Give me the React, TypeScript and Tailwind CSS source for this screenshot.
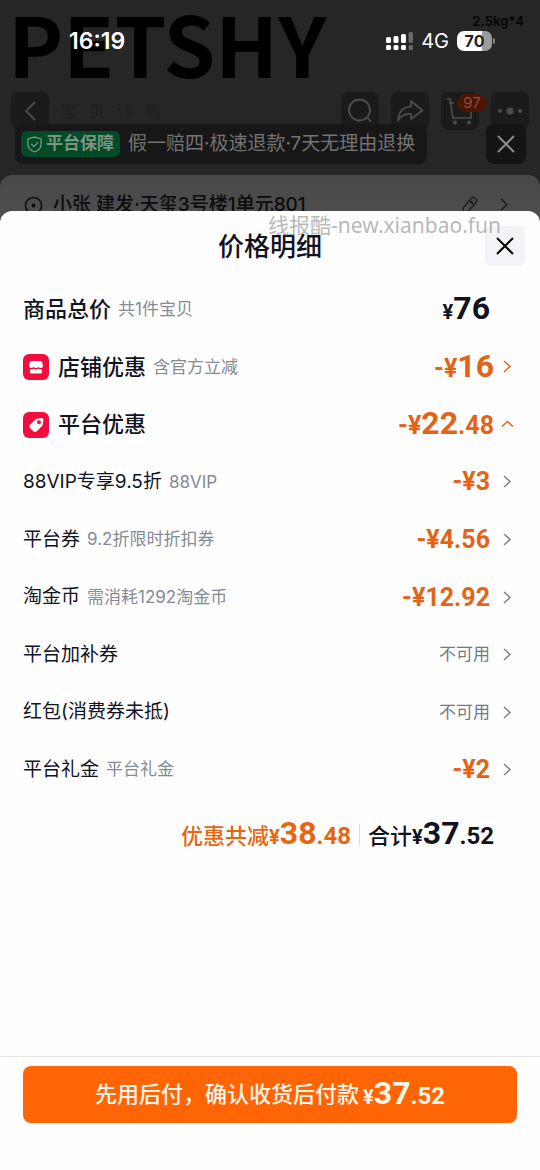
import { useState } from 'react'
import type { ReactNode } from 'react'

interface Discount {
  id: string
  name: string
  note?: string
  amount: string | null
}

const discounts: Discount[] = [
  { id: 'vip', name: '88VIP专享9.5折', note: '88VIP', amount: '3' },
  { id: 'coupon', name: '平台券', note: '9.2折限时折扣券', amount: '4.56' },
  { id: 'coin', name: '淘金币', note: '需消耗1292淘金币', amount: '12.92' },
  { id: 'extra', name: '平台加补券', amount: null },
  { id: 'redpacket', name: '红包(消费券未抵)', amount: null },
  { id: 'gift', name: '平台礼金', note: '平台礼金', amount: '2' },
]

const navBox = 'flex size-[38px] items-center justify-center rounded-lg bg-[#1b1b1b] text-[#4d4d4d]'

function Chevron({ up = false }: { up?: boolean }) {
  return (
    <svg viewBox="0 0 20 20" className="size-5 flex-shrink-0" fill="none" stroke="currentColor" strokeWidth="1.5">
      <path d={up ? 'M4 11.5 9.5 6.5 15 11.5' : 'M6 4 12 9.5 6 15'} />
    </svg>
  )
}

function Cross() {
  return (
    <svg viewBox="0 0 20 20" className="size-5" fill="none" stroke="currentColor" strokeWidth="2">
      <path d="M2 2 18 18M18 2 2 18" />
    </svg>
  )
}

function Price({ value, sign = '', small = false }: { value: string; sign?: string; small?: boolean }) {
  const [whole, cents] = value.split('.')
  return (
    <span className={`font-['Roboto'] leading-8 font-bold ${small ? 'text-2xl' : 'text-[25px]'}`}>
      {sign}
      <span className={small ? 'text-xl' : ''}>¥</span>
      <span className="text-[32px]">{whole}</span>
      {cents && `.${cents}`}
    </span>
  )
}

function Row({ label, note, icon, children }: { label: ReactNode; note?: string; icon?: ReactNode; children: ReactNode }) {
  return (
    <div className="flex w-full items-center pr-[22px] pl-[23px] text-left">
      {icon}
      {label}
      {note && <span className="ml-[7px] text-[17px] text-[#858a94]">{note}</span>}
      <span className="ml-auto flex items-center gap-2">{children}</span>
    </div>
  )
}

function StatusBar() {
  return (
    <div className="relative flex h-20 items-center pt-0.5 text-white">
      <span className="ml-[69px] text-[23px] font-semibold">16:19</span>
      <div className="mr-[45px] ml-auto flex items-center">
        <svg viewBox="0 0 27 20" className="mr-2 h-5 w-[27px]" fill="currentColor">
          <rect x="0" y="6" width="5" height="6" rx="1.5" />
          <rect x="0" y="14" width="5" height="5" rx="1.5" />
          <rect x="7.5" y="5" width="5" height="7" rx="1.5" />
          <rect x="7.5" y="14" width="5" height="5" rx="1.5" />
          <rect x="15" y="3" width="5" height="9" rx="1.5" />
          <rect x="15" y="14" width="5" height="5" rx="1.5" />
          <g opacity=".3">
            <rect x="22.5" y="1" width="4.5" height="11" rx="1.5" />
            <rect x="22.5" y="14" width="4.5" height="5" rx="1.5" />
          </g>
        </svg>
        <span className="mr-2 text-xl">4G</span>
        <span className="flex items-center gap-px">
          <span className="flex h-5 w-[35px] items-center justify-center rounded-[7px] bg-linear-to-r from-white from-70% to-[#9b9b9b] to-70% text-base leading-5 font-bold text-[#222]">
            70
          </span>
          <span className="h-1.5 w-0.5 rounded-r bg-[#8a8a8a]" />
        </span>
      </div>
    </div>
  )
}

function NavBar() {
  return (
    <nav className="mt-3 flex items-center gap-3 px-[11px]">
      <button aria-label="返回" className={navBox}>
        <svg viewBox="0 0 24 24" className="size-6" fill="none" stroke="currentColor" strokeWidth="1.8">
          <path d="M17 3 8 12 17 21" />
        </svg>
      </button>
      <span className="flex flex-1 gap-3 text-base text-[#202020]">
        <span>宝</span>
        <span>贝</span>
        <span>详</span>
        <span>情</span>
      </span>
      <button aria-label="搜索" className={navBox}>
        <svg viewBox="0 0 26 26" className="size-[26px]" fill="none" stroke="currentColor" strokeWidth="1.8">
          <circle cx="12.5" cy="12" r="10.5" />
          <path d="m20 19.5 4 4" />
        </svg>
      </button>
      <button aria-label="分享" className={navBox}>
        <svg viewBox="0 0 28 24" className="h-6 w-7" fill="none" stroke="currentColor" strokeWidth="1.7" strokeLinejoin="round">
          <path d="M15 2 26.5 11.5 15 20V15C9 14.5 5 16.5 2 21.5C2.5 13 7 8 15 7.5Z" />
        </svg>
      </button>
      <button aria-label="购物车" className={`${navBox} relative`}>
        <svg viewBox="0 0 28 30" className="h-[30px] w-7" fill="none" stroke="currentColor" strokeWidth="1.6">
          <path d="M1 3H4L7 22H25V12M3 7H8" />
          <circle cx="9" cy="26.5" r="2" fill="currentColor" stroke="none" />
          <circle cx="23" cy="26.5" r="2" fill="currentColor" stroke="none" />
        </svg>
        <span className="absolute top-0.5 -right-2 flex h-[18px] w-[30px] items-center justify-center rounded-full bg-[#4c1505] text-[15px] text-[#8a5038]">
          97
        </span>
      </button>
      <button aria-label="更多" className={navBox}>
        <svg viewBox="0 0 28 8" className="h-2 w-7" fill="currentColor">
          <circle cx="4" cy="4" r="2" />
          <circle cx="14" cy="4" r="3.6" />
          <circle cx="24" cy="4" r="2" />
        </svg>
      </button>
    </nav>
  )
}

function GuaranteeBar() {
  return (
    <div className="relative -mt-1.5 flex items-center justify-between pr-3.5 pl-[15px]">
      <div className="flex h-10 items-center gap-2 rounded-lg bg-[#171717] pr-3 pl-1.5">
        <span className="flex h-[26px] items-center gap-1 rounded-md bg-[#034a26] px-1.5 text-[17px] font-bold text-[#7d9384]">
          <svg viewBox="0 0 16 18" className="h-[17px] w-[15px]" fill="none" stroke="currentColor" strokeWidth="1.4">
            <path d="M8 1 15 3V9C15 13 12 15.5 8 17C4 15.5 1 13 1 9V3Z" />
            <path d="m4.5 8.5 2.8 2.8L12 6.5" />
          </svg>
          平台保障
        </span>
        <span className="text-[19px] text-[#747474]">假一赔四·极速退款·7天无理由退换</span>
      </div>
      <button aria-label="关闭保障" className="flex size-10 items-center justify-center rounded-lg bg-[#121416] text-[#8a8a8a]">
        <Cross />
      </button>
    </div>
  )
}

function AddressCard() {
  return (
    <div className="relative mt-[11px] flex h-[60px] items-center rounded-t-xl bg-linear-to-b from-[#484848] to-[#505050] pr-[25px] pl-6 text-[#0b0b0d]">
      <svg viewBox="0 0 20 20" className="size-[19px]" fill="none" stroke="currentColor" strokeWidth="1.6">
        <circle cx="10" cy="10" r="8.5" />
        <circle cx="10" cy="10" r="2" fill="currentColor" stroke="none" />
      </svg>
      <span className="ml-2.5 text-[19px] font-medium">小张 建发·天玺3号楼1单元801</span>
      <span className="ml-auto flex items-center gap-4 text-[#1d1d1d]">
        <svg viewBox="0 0 18 20" className="h-5 w-[18px]" fill="none" stroke="currentColor" strokeWidth="1.3" strokeLinejoin="round">
          <path d="M2 18 2.5 12.5 10.5 3Q12 1.5 14 3L15 4Q16.5 5.5 15 7.5L7 16.5ZM8.5 5.5 13 9.5M11.5 6 9.5 8.5" />
        </svg>
        <Chevron />
      </span>
    </div>
  )
}

export default function App() {
  const [open, setOpen] = useState(true)
  const visible = open ? discounts : []

  return (
    <div className="flex min-h-screen flex-col bg-[#262626] font-['Inter','Noto_Sans_CJK_SC',sans-serif]">
      {/* ── dimmed product page ── */}
      <header className="relative">
        <p className="absolute top-0 left-2 font-['Noto_Sans_CJK_SC'] text-[83px] leading-[84px] font-bold text-black">PETSHY</p>
        <p className="absolute top-3 right-4 text-[13px] font-bold text-[#080808]">2.5kg*4</p>
        <StatusBar />
        <NavBar />
        <GuaranteeBar />
        <AddressCard />
      </header>

      {/* ── price sheet ── */}
      <main className="relative -mt-6 flex flex-1 flex-col rounded-t-xl bg-[#fefefe] text-[#11131f]">
        <div className="relative flex h-[70px] items-center justify-center">
          <h1 className="text-[26px] font-medium">价格明细</h1>
          <button
            aria-label="关闭"
            className="absolute right-[15px] flex size-10 items-center justify-center rounded-md bg-[#f3f4f7] text-black"
          >
            <Cross />
          </button>
          <span className="pointer-events-none absolute top-0 right-[39px] font-['Noto_Sans','Noto_Sans_CJK_SC',sans-serif] text-[21px] leading-7 text-[#888]/60">
            线报酷-new.xianbao.fun
          </span>
        </div>

        <div className="grid min-h-[518px] auto-rows-fr">
          <Row label={<span className="text-[22px] font-medium">商品总价</span>} note="共1件宝贝">
            <Price value="76" small />
            <span className="w-5" />
          </Row>
          <button className="flex">
            <Row
              icon={
                <svg viewBox="0 0 26 26" className="mr-[9px] size-[26px]">
                  <rect width="26" height="26" rx="6" fill="#f20d3f" />
                  <path d="M8.5 7H17.5Q19 7 19.3 8.5L20 12Q20 14 18 14T15.5 13Q14.5 14 13 14T10.5 13Q9.5 14 8 14T6 12L6.7 8.5Q7 7 8.5 7Z" fill="#fff" />
                  <path d="M7 15.3Q9 16 10.5 14.8Q13 16.3 15.5 14.8Q17 16 19 15.3V18Q19 19.5 17.5 19.5H8.5Q7 19.5 7 18Z" fill="#fff" />
                </svg>
              }
              label={<span className="text-[22px] font-medium">店铺优惠</span>}
              note="含官方立减"
            >
              <span className="flex items-center gap-1 text-[#e36414]">
                <Price value="16" sign="-" />
                <Chevron />
              </span>
            </Row>
          </button>
          <button className="flex" aria-expanded={open} onClick={() => setOpen(!open)}>
            <Row
              icon={
                <svg viewBox="0 0 26 26" className="mr-[9px] size-[26px]">
                  <rect width="26" height="26" rx="6" fill="#f20d3f" />
                  <path
                    d="M13 7 18.5 6Q20.5 6 20.5 8L19.5 13.5 13.5 19.5Q12 20.5 10.5 19.5L6.8 15.8Q5.5 14.5 6.8 13ZM16 8.3A2 2 0 1 0 16 12.3A2 2 0 1 0 16 8.3Z"
                    fill="#fff"
                    fillRule="evenodd"
                  />
                </svg>
              }
              label={<span className="text-[22px] font-medium">平台优惠</span>}
            >
              <span className="flex items-center gap-1 text-[#e36414]">
                <Price value="22.48" sign="-" />
                <Chevron up={open} />
              </span>
            </Row>
          </button>
          {visible.map(d => (
            <button key={d.id} className="flex">
              <Row label={<span className="text-[19px]">{d.name}</span>} note={d.note}>
                {d.amount ? (
                  <span className="font-['Roboto'] text-[25px] leading-8 font-bold text-[#e36414]">-¥{d.amount}</span>
                ) : (
                  <span className="text-[17px] text-[#737985]">不可用</span>
                )}
                <span className="text-[#7c7f86]"><Chevron /></span>
              </Row>
            </button>
          ))}
        </div>

        <div className="flex h-[72px] items-center justify-end pr-[46px] text-[22px] font-medium">
          <p className="text-[#e8660f]">
            优惠共减<Price value="38.48" small />
          </p>
          <span className="mx-2 h-[22px] w-px bg-[#dcdcdc]" />
          <p>
            合计<Price value="37.52" small />
          </p>
        </div>

        <footer className="mt-auto border-t border-[#e4e4e4] px-[23px] pt-[9px] pb-[47px]">
          <button className="flex h-[57px] w-full items-center justify-center gap-1 rounded-lg bg-[#ff6504] text-[22px] font-medium text-[#fff5ea]">
            先用后付，确认收货后付款
            <Price value="37.52" small />
          </button>
        </footer>
      </main>
    </div>
  )
}
